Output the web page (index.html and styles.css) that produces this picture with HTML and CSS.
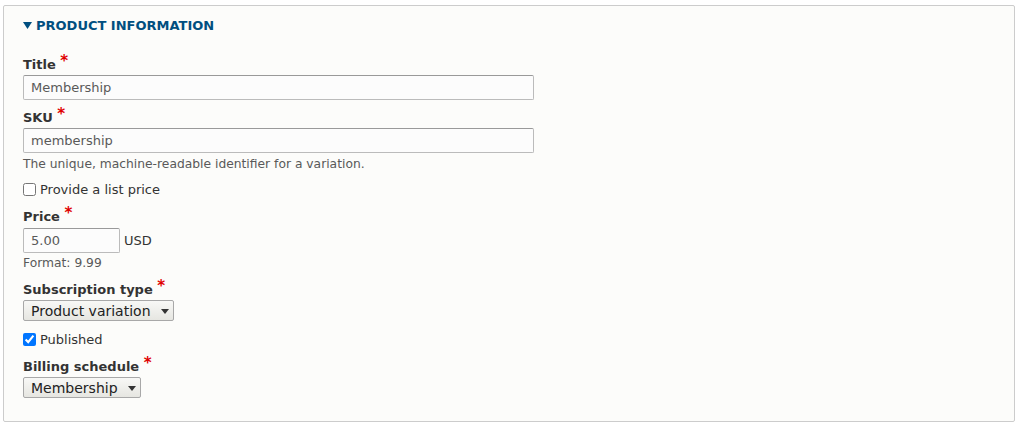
FILE: index.html
```html
<!DOCTYPE html>
<html>
<head>
<meta charset="utf-8">
<link rel="stylesheet" href="styles.css">
</head>
<body>
<div class="panel">
  <div class="summary"><svg class="tri" width="9" height="7" viewBox="0 0 9 7"><path d="M0 0H9L4.5 7Z" fill="#004f80"/></svg>Product information</div>
  <div class="panel-body">
    <div class="item item-title">
      <div class="label">Title <span class="req">*</span></div>
      <div class="text-input wide">Membership</div>
    </div>
    <div class="item item-sku">
      <div class="label">SKU <span class="req">*</span></div>
      <div class="text-input wide">membership</div>
      <div class="desc">The unique, machine-readable identifier for a variation.</div>
    </div>
    <label class="check check-list"><input type="checkbox">Provide a list price</label>
    <div class="item item-price">
      <div class="label">Price <span class="req">*</span></div>
      <div class="price-row"><div class="text-input price">5.00</div><span class="currency">USD</span></div>
      <div class="desc desc-format">Format: 9.99</div>
    </div>
    <div class="item item-sub">
      <div class="label">Subscription type <span class="req">*</span></div>
      <div class="select"><span>Product variation</span><svg class="arrow" width="8" height="5" viewBox="0 0 8 5"><path d="M0 0H8L4 5Z" fill="#333"/></svg></div>
    </div>
    <label class="check check-pub"><input type="checkbox" checked>Published</label>
    <div class="item item-bill">
      <div class="label">Billing schedule <span class="req">*</span></div>
      <div class="select"><span>Membership</span><svg class="arrow" width="8" height="5" viewBox="0 0 8 5"><path d="M0 0H8L4 5Z" fill="#333"/></svg></div>
    </div>
  </div>
</div>
</body>
</html>
```
FILE: styles.css
```css
html, body {
  margin: 0;
  padding: 0;
  background: #ffffff;
}
body {
  font-family: "DejaVu Sans", Verdana, sans-serif;
  color: #333333;
}
.panel {
  margin: 5px 5px 0 3px;
  height: 417px;
  box-sizing: border-box;
  border: 1px solid #cccccc;
  border-radius: 2px;
  background: #fcfcfa;
}
.summary {
  padding: 11px 0 0 19px;
  height: 17px;
  line-height: 18px;
  font-size: 13px;
  font-weight: bold;
  text-transform: uppercase;
  color: #004f80;
  display: flex;
  align-items: center;
}
.tri {
  margin-right: 4px;
}
.panel-body {
  padding: 21px 0 0 19px;
  display: flex;
  flex-direction: column;
  align-items: flex-start;
}
.item {
  display: flex;
  flex-direction: column;
  align-items: flex-start;
}
.label {
  font-size: 13px;
  font-weight: bold;
  line-height: 18px;
  height: 17px;
  padding-top: 1px;
  margin-bottom: 2px;
}
.req {
  color: #e00000;
  font-size: 15px;
  vertical-align: 3px;
  line-height: 0;
}
.text-input {
  box-sizing: border-box;
  height: 25px;
  border: 1px solid #bbbbbb;
  border-top-color: #999999;
  border-radius: 2px;
  background: #fcfcfc;
  font-size: 13px;
  line-height: 23px;
  padding: 0 7px;
  color: #595959;
}
.wide { width: 511px; }
.price { width: 97px; }
.item-sku { margin-top: 8px; }
.desc {
  font-size: 12.3px;
  line-height: 14px;
  height: 13px;
  padding-top: 1px;
  color: #595959;
  margin-top: 3px;
}
.check {
  display: flex;
  align-items: center;
  font-size: 13px;
  line-height: 18px;
  height: 17px;
  padding-top: 1px;
  color: #333333;
}
.check input {
  margin: 0 4px 0 0;
  width: 13px;
  height: 13px;
}
.check-list { margin-top: 10px; }
.item-price { margin-top: 9px; }
.item-price .label { margin-bottom: 3px; }
.price-row {
  display: flex;
  align-items: center;
  gap: 4px;
}
.currency {
  font-size: 13px;
  color: #333333;
}
.desc-format { margin-top: 2px; }
.item-sub { margin-top: 11px; }
.select {
  box-sizing: border-box;
  height: 21px;
  display: inline-flex;
  align-items: center;
  gap: 10px;
  padding: 0 4px 0 7px;
  border: 1px solid #a8a8a8;
  border-radius: 2px;
  background: linear-gradient(#f8f8f6, #e6e6e1);
  font-size: 14px;
  color: #222222;
}
.arrow { margin-top: 1px; }
.check-pub { margin-top: 9px; }
.item-bill { margin-top: 9px; }
```
